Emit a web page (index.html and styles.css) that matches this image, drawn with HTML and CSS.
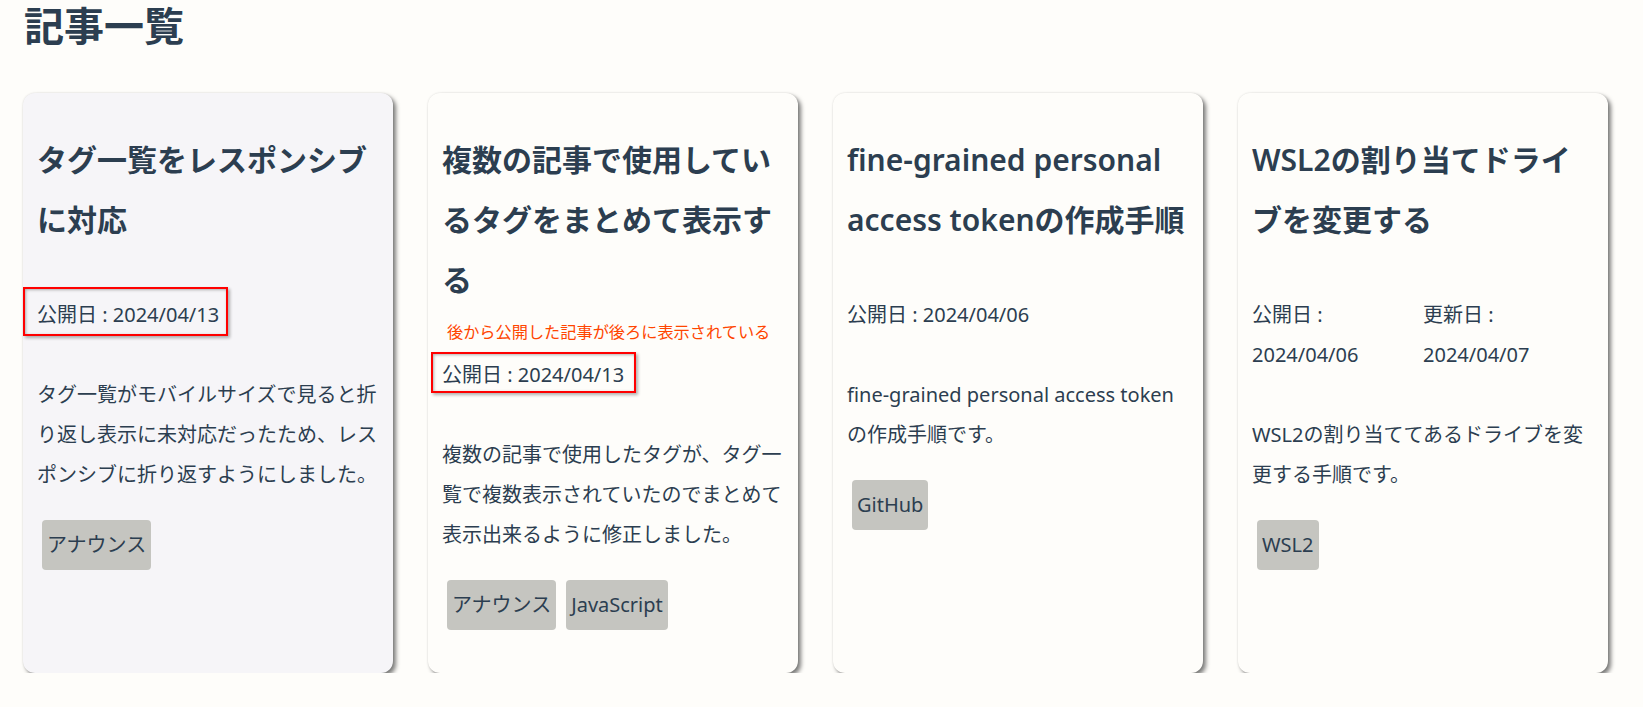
FILE: index.html
```html
<!DOCTYPE html>
<html lang="ja">
<head>
<meta charset="utf-8">
<title>記事一覧</title>
<link rel="stylesheet" href="styles.css">
</head>
<body>
<main class="page">
  <h1 class="page-title">記事一覧</h1>
  <div class="cards">
    <article class="card card-active">
      <h2 class="card-title">タグ一覧をレスポンシブに対応</h2>
      <p class="dates">
        <span class="date">公開日 : 2024/04/13</span>
        <span class="mark mark-1"></span>
      </p>
      <p class="desc">タグ一覧がモバイルサイズで見ると折り返し表示に未対応だったため、レスポンシブに折り返すようにしました。</p>
      <div class="tags"><span class="tag">アナウンス</span></div>
    </article>
    <article class="card">
      <h2 class="card-title">複数の記事で使用しているタグをまとめて表示する</h2>
      <p class="dates">
        <span class="date">公開日 : 2024/04/13</span>
        <span class="mark mark-2"></span>
        <span class="note">後から公開した記事が後ろに表示されている</span>
      </p>
      <p class="desc">複数の記事で使用したタグが、タグ一覧で複数表示されていたのでまとめて表示出来るように修正しました。</p>
      <div class="tags"><span class="tag">アナウンス</span><span class="tag">JavaScript</span></div>
    </article>
    <article class="card">
      <h2 class="card-title">fine-grained personal access tokenの作成手順</h2>
      <p class="dates">
        <span class="date">公開日 : 2024/04/06</span>
      </p>
      <p class="desc">fine-grained personal access tokenの作成手順です。</p>
      <div class="tags"><span class="tag">GitHub</span></div>
    </article>
    <article class="card">
      <h2 class="card-title">WSL2の割り当てドライブを変更する</h2>
      <p class="dates">
        <span class="date">公開日 : 2024/04/06</span>
        <span class="date">更新日 : 2024/04/07</span>
      </p>
      <p class="desc">WSL2の割り当ててあるドライブを変更する手順です。</p>
      <div class="tags"><span class="tag">WSL2</span></div>
    </article>
  </div>
</main>
</body>
</html>
```

FILE: styles.css
```css
html, body {
  margin: 0;
  padding: 0;
}

body {
  background: #fefdfa;
  color: #2c3e50;
  font-family: "Noto Sans", "Noto Sans CJK JP", sans-serif;
  font-size: 20px;
  line-height: 40px;
}

.page {
  padding: 0 23px;
}

.page-title {
  margin: 0;
  padding-left: 1px;
  font-size: 40px;
  line-height: 52px;
  font-weight: 700;
}

.cards {
  margin-top: 41px;
  display: grid;
  grid-template-columns: repeat(4, 370px);
  column-gap: 35px;
  align-items: stretch;
}

.card {
  display: flex;
  flex-direction: column;
  background: #fefdfa;
  border-radius: 12px;
  padding: 12px 14px 18px;
  box-shadow: 0 0 2px rgba(0, 0, 0, 0.12), 3px 3px 4px rgba(0, 0, 0, 0.5);
}

.card-active {
  background: #f6f5f8;
}

.card-title {
  margin: 25px 0;
  font-size: 30px;
  line-height: 60px;
  font-weight: 600;
}

.dates {
  position: relative;
  display: flex;
  margin: 20px 0;
}

.date {
  flex: 1;
}

.desc {
  margin: 20px 0;
}

.tags {
  display: flex;
  flex-wrap: wrap;
  margin-bottom: 20px;
}

.tag {
  margin: 5px;
  padding: 5px 5px;
  background: #c5c5c0;
  border-radius: 4px;
  line-height: 40px;
}

.mark {
  position: absolute;
  border: 2px solid #ff0000;
  box-sizing: border-box;
  box-shadow: inset 1px 1px 3px rgba(0, 0, 0, 0.3), 2px 2px 3px rgba(0, 0, 0, 0.3);
  pointer-events: none;
}

.mark-1 {
  left: -14px;
  top: -8px;
  width: 205px;
  height: 49px;
}

.mark-2 {
  left: -11px;
  top: -3px;
  width: 205px;
  height: 41px;
}

.note {
  position: absolute;
  left: 5px;
  top: -33px;
  font-size: 16.2px;
  line-height: 20px;
  color: #ff4500;
  white-space: nowrap;
}
```
